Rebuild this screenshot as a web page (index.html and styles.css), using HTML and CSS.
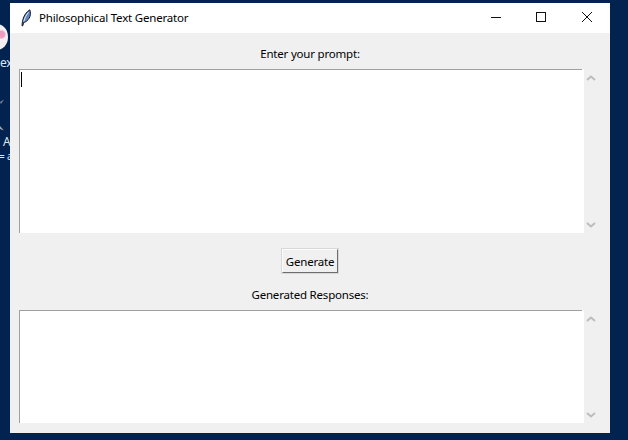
FILE: index.html
```html
<!DOCTYPE html>
<html lang="en">
<head>
<meta charset="utf-8">
<title>Philosophical Text Generator</title>
<link rel="stylesheet" href="styles.css">
</head>
<body>
<div class="desktop">
  <div class="desk-icon-round"></div>
  <span class="desk-text desk-ex">ex</span>
  <svg class="desk-mark desk-mark-one" width="10" height="8" viewBox="0 0 10 8" aria-hidden="true"><path d="M0 4L4 1.5L1 6" fill="#7d8795"/></svg>
  <svg class="desk-mark desk-mark-two" width="10" height="8" viewBox="0 0 10 8" aria-hidden="true"><path d="M0 1L4 5.5L0 4" fill="#9aa3ae"/></svg>
  <span class="desk-text desk-a">A</span>
  <span class="desk-text desk-small">= a</span>
  <main class="window">
    <header class="titlebar">
      <svg class="feather" width="12" height="18" viewBox="0 0 12 18" aria-hidden="true">
        <path d="M2 16.8 C2.2 11 4 4.5 9.8 0.8 C11.4 5 10 10.5 5.2 13 L3.6 13.4 L2.8 16.8 Z" fill="#6286bd" stroke="#10182a" stroke-width="1"/>
        <path d="M3.8 12.5 C4.8 9 6 6 8.5 3.5" fill="none" stroke="#e8eef8" stroke-width="1"/>
      </svg>
      <span class="title">Philosophical Text Generator</span>
      <div class="controls">
        <svg class="ctl" width="46" height="30" viewBox="0 0 46 30" aria-hidden="true"><path d="M19 14.5H29" stroke="#111" fill="none"/></svg>
        <svg class="ctl" width="46" height="30" viewBox="0 0 46 30" aria-hidden="true"><rect x="18.5" y="9.5" width="9" height="9" stroke="#111" fill="none"/></svg>
        <svg class="ctl" width="46" height="30" viewBox="0 0 46 30" aria-hidden="true"><path d="M18 9L28 19M28 9L18 19" stroke="#111" fill="none"/></svg>
      </div>
    </header>
    <section class="content">
      <label class="label label-prompt">Enter your prompt:</label>
      <div class="field field-prompt">
        <div class="textbox"><span class="caret"></span></div>
        <div class="scrollbar">
          <svg width="10" height="6" viewBox="0 0 10 6" aria-hidden="true"><path d="M1 5L5 1.5L9 5" class="chev"/></svg>
          <svg width="10" height="6" viewBox="0 0 10 6" aria-hidden="true"><path d="M1 1L5 4.5L9 1" class="chev"/></svg>
        </div>
      </div>
      <button class="generate" type="button">Generate</button>
      <label class="label label-resp">Generated Responses:</label>
      <div class="field field-resp">
        <div class="textbox"></div>
        <div class="scrollbar">
          <svg width="10" height="6" viewBox="0 0 10 6" aria-hidden="true"><path d="M1 5L5 1.5L9 5" class="chev"/></svg>
          <svg width="10" height="6" viewBox="0 0 10 6" aria-hidden="true"><path d="M1 1L5 4.5L9 1" class="chev"/></svg>
        </div>
      </div>
    </section>
  </main>
</div>
</body>
</html>
```
FILE: styles.css
```css
* { box-sizing: border-box; }
html, body { margin: 0; padding: 0; }
body {
  width: 628px;
  height: 440px;
  overflow: hidden;
  font-family: "Noto Sans", "Open Sans", sans-serif;
  font-size: 11.5px;
  letter-spacing: -0.2px;
  color: #000;
}
.desktop {
  position: relative;
  width: 628px;
  height: 440px;
  overflow: hidden;
  background: #02234f;
}
.desk-icon-round {
  position: absolute;
  left: -14px;
  top: 24px;
  width: 22px;
  height: 26px;
  border-radius: 50%;
  background: radial-gradient(circle at 70% 40%, #ee9cc0 0 3px, #f4f0f2 5px);
}
.desk-text { position: absolute; color: #dfe6ef; font-size: 12px; line-height: 12px; }
.desk-ex { left: 0; top: 57px; }
.desk-a { left: 3px; top: 136px; font-size: 12px; }
.desk-small { left: -1px; top: 151px; font-size: 10px; line-height: 10px; }
.desk-mark { position: absolute; }
.desk-mark-one { left: 0; top: 98px; }
.desk-mark-two { left: 0; top: 125px; }
.window {
  position: absolute;
  left: 10px;
  top: 3px;
  width: 600px;
  height: 430px;
  background: #f0f0f0;
  display: flex;
  flex-direction: column;
}
.titlebar {
  height: 30px;
  background: #fff;
  display: flex;
  align-items: center;
  padding-left: 10px;
}
.feather { flex: none; }
.title { margin-left: 7px; padding-bottom: 2px; }
.controls { margin-left: auto; display: flex; }
.ctl { display: block; }
.content {
  flex: 1;
  display: flex;
  flex-direction: column;
  align-items: stretch;
  padding: 0 12px 10px 9px;
}
.label { display: block; text-align: center; line-height: 14px; padding-left: 3px; }
.label-prompt { margin-top: 14px; }
.label-resp { margin-top: 14px; }
.field { display: flex; }
.field-prompt { height: 164px; margin-top: 8px; }
.field-resp { height: 113px; margin-top: 8px; }
.textbox {
  width: 565px;
  background: #fff;
  border-left: 1px solid #a0a0a0;
  position: relative;
}
.textbox::before {
  content: "";
  position: absolute;
  left: -1px;
  right: 2px;
  top: 0;
  height: 1px;
  background: #a0a0a0;
}
.caret {
  position: absolute;
  left: 1px;
  top: 3px;
  width: 1px;
  height: 15px;
  background: #000;
}
.scrollbar {
  flex: 1;
  display: flex;
  flex-direction: column;
  justify-content: space-between;
  align-items: center;
  padding: 6px 0 5px;
}
.scrollbar svg { display: block; }
.chev { fill: none; stroke: #bdbdbd; stroke-width: 2; }
.generate {
  align-self: center;
  margin: 15px 0 0 3px;
  width: 58px;
  height: 26px;
  padding: 0;
  background: #f0f0f0;
  color: #000;
  font: inherit;
  letter-spacing: inherit;
  border: 2px solid;
  border-color: #fcfcfc #6d6d6d #6d6d6d #fcfcfc;
  outline: 1px solid #d8d8d8;
  outline-offset: -1px;
}
```
